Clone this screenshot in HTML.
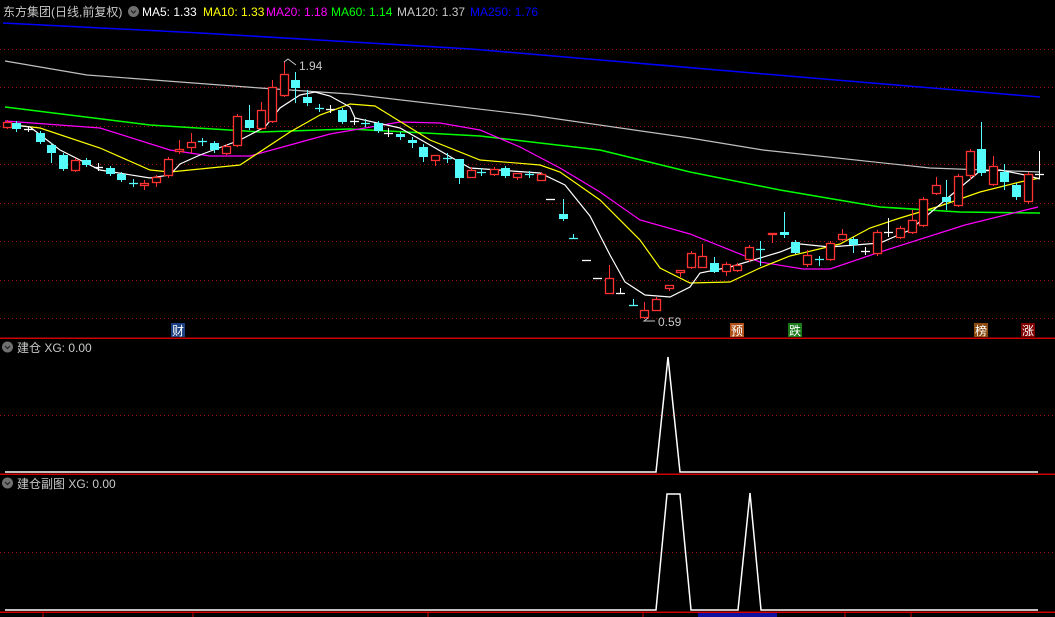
<!DOCTYPE html>
<html><head><meta charset="utf-8"><style>
html,body{margin:0;padding:0;background:#000;width:1055px;height:617px;overflow:hidden}
svg{position:absolute;left:0;top:0}
.t{font-family:"Liberation Sans","Noto Sans CJK SC",sans-serif;font-size:12px}
</style></head><body>
<svg id="s" width="1055" height="617" viewBox="0 0 1055 617" xmlns="http://www.w3.org/2000/svg">
<g stroke="#a01010" stroke-width="1" stroke-dasharray="1,3">
<line x1="0" y1="49.5" x2="1055" y2="49.5"/><line x1="0" y1="87.5" x2="1055" y2="87.5"/>
<line x1="0" y1="126.5" x2="1055" y2="126.5"/><line x1="0" y1="164.5" x2="1055" y2="164.5"/>
<line x1="0" y1="203.5" x2="1055" y2="203.5"/><line x1="0" y1="241.5" x2="1055" y2="241.5"/>
<line x1="0" y1="280.5" x2="1055" y2="280.5"/><line x1="0" y1="318.5" x2="1055" y2="318.5"/>
<line x1="0" y1="415.5" x2="1055" y2="415.5"/><line x1="0" y1="552.5" x2="1055" y2="552.5"/>
</g>
<g fill="none" stroke-width="1.2">
<polyline stroke="#0000ff" stroke-width="1.5" points="3,23 200,33 471,49 824,79 1040,97"/>
<polyline stroke="#c0c0c0" points="5,61 87,75 260,88 350,94 530,115 690,138 763,150 930,168 1040,172"/>
<polyline stroke="#00ff00" stroke-width="1.5" points="5,107 150,125 260,132 350,129 480,136 600,150 690,172 780,190 880,207 960,212 1040,213"/>
<polyline stroke="#ff00ff" points="5,121 100,128 170,150 210,156 250,156 290,145 330,134 400,122 440,123 480,130 520,147 560,168 600,192 640,220 690,234 760,262 803,269 830,269 880,252 965,225 1038,207"/>
<polyline stroke="#ffff00" points="5,124 40,128 100,148 150,170 170,172 240,165 290,132 320,115 350,104 375,106 430,140 480,160 540,165 560,172 600,200 640,240 660,268 690,283 730,282 760,268 790,256 840,244 870,228 900,218 940,206 980,192 1020,182 1040,178"/>
<polyline stroke="#ffffff" points="5,124 30,127 60,150 100,170 150,178 170,175 180,164 200,155 240,140 265,127 280,108 300,95 315,92 330,96 350,107 355,118 400,128 430,145 470,168 540,173 565,185 590,216 610,255 625,282 645,295 670,297 690,287 700,273 730,267 780,252 800,244 830,247 880,243 910,230 930,213 950,196 980,171 1000,170 1025,175 1040,179"/>
</g>
<g id="cd"></g>
<g class="t" fill="#c8c8c8">
<text x="299" y="70">1.94</text>
<text x="658" y="326">0.59</text>
</g>
<polyline points="284,62 288,59 296,65" fill="none" stroke="#c8c8c8"/>
<polyline points="648,318 644,321 655,321" fill="none" stroke="#c8c8c8"/>
<g class="t" font-size="12">
<rect x="171" y="323" width="14" height="14" fill="#1a4080"/><text x="172" y="335" fill="#fff">财</text>
<rect x="730" y="323" width="14" height="14" fill="#b0501a"/><text x="731" y="335" fill="#fff">预</text>
<rect x="788" y="323" width="14" height="14" fill="#1a7a1a"/><text x="789" y="335" fill="#fff">跌</text>
<rect x="974" y="323" width="14" height="14" fill="#8a4a10"/><text x="975" y="335" fill="#fff">榜</text>
<rect x="1021" y="323" width="14" height="14" fill="#800000"/><text x="1022" y="335" fill="#fff">涨</text>
</g>
<rect x="0" y="337.5" width="1055" height="1.5" fill="#d00000"/>
<rect x="0" y="473.5" width="1055" height="1.5" fill="#d00000"/>
<rect x="0" y="611.5" width="1055" height="1.5" fill="#d00000"/>
<g fill="none" stroke="#fff" stroke-width="1.5">
<polyline points="5,472 656,472 668,357 680,472 1038,472"/>
<polyline points="5,610 656,610 667,494 680,494 691,610 738,610 750,493 761,610 1038,610"/>
</g>
<g stroke="#d00000"><line x1="43" y1="612" x2="43" y2="617"/><line x1="193" y1="612" x2="193" y2="617"/><line x1="428" y1="612" x2="428" y2="617"/><line x1="643" y1="612" x2="643" y2="617"/><line x1="845" y1="612" x2="845" y2="617"/><line x1="911" y1="612" x2="911" y2="617"/></g>
<rect x="698" y="613" width="79" height="4" fill="#1010a0"/>
<g class="t">
<text x="3" y="16" fill="#c8c8c8">东方集团(日线,前复权)</text>
<circle cx="133.5" cy="11.5" r="5.5" fill="#707070"/><polyline points="131,10.5 133.5,13 136,10.5" fill="none" stroke="#222" stroke-width="1.2"/>
<text x="142" y="16" fill="#fff">MA5: 1.33</text>
<text x="203" y="16" fill="#ffff00">MA10: 1.33</text>
<text x="266" y="16" fill="#ff00ff">MA20: 1.18</text>
<text x="331" y="16" fill="#00ff00">MA60: 1.14</text>
<text x="397" y="16" fill="#c8c8c8">MA120: 1.37</text>
<text x="470" y="16" fill="#0000ff">MA250: 1.76</text>
<circle cx="7.5" cy="347" r="5.5" fill="#707070"/><polyline points="5,346 7.5,348.5 10,346" fill="none" stroke="#222" stroke-width="1.2"/>
<text x="17" y="352" fill="#c8c8c8">建仓  XG: 0.00</text>
<circle cx="7.5" cy="483" r="5.5" fill="#707070"/><polyline points="5,482 7.5,484.5 10,482" fill="none" stroke="#222" stroke-width="1.2"/>
<text x="17" y="488" fill="#c8c8c8">建仓副图  XG: 0.00</text>
</g>
</svg>
<script>
var D=[
['r',3,122,127,120,129],['c',12,123,129,121,132],['w',28,129,126,132],['c',36,133,142,131,144],['c',47,145,153,143,163],['c',59,155,169,153,171],['r',71,160,170,158,172],['c',82,160,165,158,167],['w',98,167,163,171],['c',106,168,174,166,176],['c',117,174,180,172,182],['k',133,183,179,187],['r',140,183,185,180,190],['r',152,177,182,175,187],['r',164,159,175,157,178],['r',175,149,151,140,154],['r',187,142,147,133,153],['k',202,141,138,146],['c',210,143,150,141,153],['r',222,146,153,144,155],['r',233,116,145,114,147],['c',245,120,128,105,130],['r',257,110,128,102,130],['r',268,87,121,80,123],['r',280,74,95,62,97],['c',291,80,88,72,103],['c',303,97,103,90,106],['k',319,108,104,112],['w',330,109,105,113],['c',338,110,122,108,124],['w',354,121,118,125],['k',365,123,119,127],['c',374,123,131,121,133],['w',388,133,128,137],['c',396,134,137,132,140],['c',408,140,143,137,148],['c',419,147,157,144,162],['r',431,155,160,155,166],['k',447,158,153,163],['c',455,159,178,159,184],['r',467,170,177,167,178],['k',481,172,168,176],['r',490,169,174,167,176],['c',501,168,176,166,178],['r',513,173,177,173,180],['k',529,174,171,178],['r',537,174,180,172,181],['w',550,199,199,199],['c',559,214,219,199,221],['k',573,238,234,238],['w',586,260,260,260],['w',597,278,278,278],['r',605,278,293,265,294],['w',620,293,288,293],['k',633,305,299,305],['r',640,310,317,302,319],['r',652,299,310,297,311],['r',665,285,288,285,291],['r',676,270,272,270,277],['r',687,253,267,251,269],['r',698,256,267,244,268],['c',710,263,272,257,273],['r',722,264,271,262,276],['r',733,265,270,263,272],['r',745,247,259,245,262],['k',760,249,241,266],['r',768,233,234,233,243],['c',780,232,235,212,238],['c',791,242,253,240,254],['r',803,255,264,250,267],['k',819,259,256,266],['r',826,243,259,241,261],['r',838,234,239,229,241],['c',849,239,245,237,253],['w',865,251,247,255],['r',873,232,253,230,256],['w',888,232,218,237],['r',896,228,237,226,239],['r',908,220,232,210,234],['r',919,199,225,197,227],['r',932,185,193,177,195],['c',942,197,202,180,210],['r',954,176,205,174,207],['r',966,151,175,149,180],['c',977,149,173,122,176],['r',989,166,184,156,186],['c',1000,172,182,164,190],['c',1012,185,197,183,200],['r',1024,174,201,172,204],['w',1039,174,151,179]];
var g=document.getElementById('cd'),h='';
D.forEach(function(d){var t=d[0];
if(t=='r'||t=='c'){var x=d[1],w=8,cx=x+w/2+0.5,col=t=='r'?'#ff3232':'#54fcfc';
h+='<line x1="'+cx+'" y1="'+d[4]+'" x2="'+cx+'" y2="'+d[5]+'" stroke="'+col+'"/>';
if(t=='r')h+='<rect x="'+(x+0.5)+'" y="'+(d[2]+0.5)+'" width="'+w+'" height="'+Math.max(1,d[3]-d[2])+'" fill="#000" stroke="'+col+'" stroke-width="1.3"/>';
else h+='<rect x="'+x+'" y="'+d[2]+'" width="'+(w+1)+'" height="'+Math.max(2,d[3]-d[2])+'" fill="'+col+'"/>';}
else{var cx=d[1]+0.5,col=t=='w'?'#fff':'#54fcfc';
h+='<line x1="'+(cx-4.5)+'" y1="'+(d[2]+0.5)+'" x2="'+(cx+4.5)+'" y2="'+(d[2]+0.5)+'" stroke="'+col+'" stroke-width="1.3"/>';
if(d[4]>d[3])h+='<line x1="'+cx+'" y1="'+d[3]+'" x2="'+cx+'" y2="'+d[4]+'" stroke="'+col+'"/>';}});
g.innerHTML=h;
</script>
</body></html>
